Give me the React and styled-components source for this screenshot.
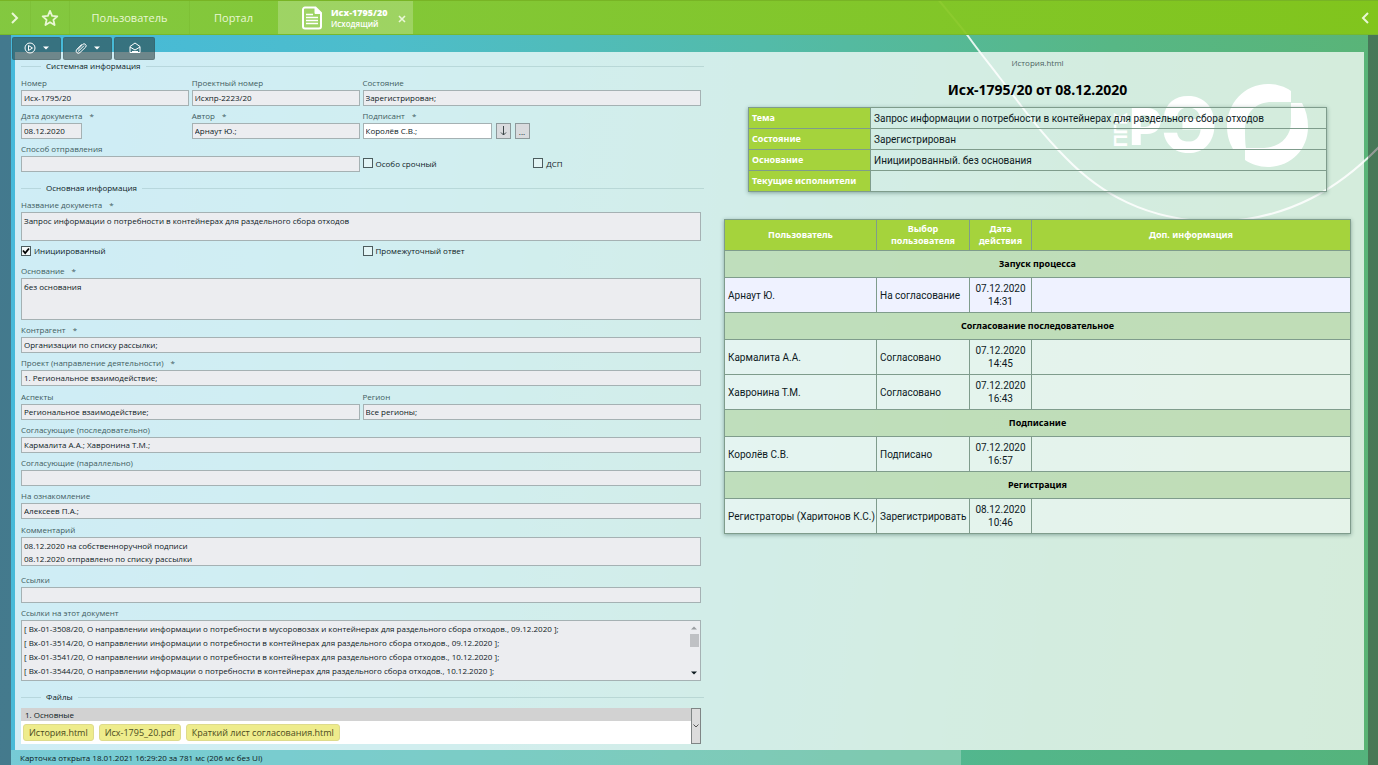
import React, { useId } from 'react';
import styled, { createGlobalStyle } from 'styled-components';

const GlobalStyle = createGlobalStyle`
  * {
    box-sizing: border-box;
  }
  body {
    margin: 0;
    font-family: 'Open Sans', 'Noto Sans', sans-serif;
    font-size: 8px;
    color: #0d1a1e;
  }
  button, input, textarea {
    font: inherit;
    color: inherit;
    margin: 0;
  }
`;

const Page = styled.div`
  position: relative;
  display: flex;
  flex-direction: column;
  min-height: 100vh;
  overflow: hidden;
  background: linear-gradient(97deg, #45b9dc 0%, #4dbdcb 26%, #53bba9 52%, #57b785 76%, #5ab373 100%);
`;

const Backdrop = styled.svg`
  position: absolute;
  top: 0;
  right: 0;
  pointer-events: none;
`;

const Nav = styled.nav`
  position: relative;
  display: flex;
  height: 35px;
  border-top: 1px solid #78b425;
  border-bottom: 1px solid #76b82c;
  background: linear-gradient(90deg, rgba(136, 201, 52, 0.93), rgba(132, 198, 22, 0.93));
  color: #e9f7d4;
`;

const NavButton = styled.button`
  display: flex;
  align-items: center;
  justify-content: center;
  width: ${({ $width }) => $width}px;
  padding: 0;
  border: 0;
  border-right: 1px solid ${({ $divider }) => ($divider ? 'rgba(90, 150, 20, 0.12)' : 'transparent')};
  background: none;
  font-size: 11px;
`;

const Tab = styled.div`
  display: flex;
  align-items: center;
  width: 135px;
  padding-left: 24px;
  background: rgba(255, 255, 255, 0.22);
  color: #fff;
`;

const TabText = styled.div`
  flex: 1;
  margin-left: 8px;
  font-size: 8px;
  font-weight: 600;
  line-height: 11px;
  strong {
    display: block;
    font-size: 9px;
    font-weight: 800;
  }
`;

const TabClose = styled.button`
  display: flex;
  padding: 2px 7px 0;
  border: 0;
  background: none;
`;

const Spacer = styled.div`
  flex: 1;
`;

const Body = styled.div`
  position: relative;
  display: flex;
  flex: 1;
  flex-direction: column;
  border-left: 11px solid rgba(66, 70, 80, 0.55);
  border-right: 10px solid rgba(50, 50, 50, 0.46);
`;

const Toolbar = styled.div`
  position: relative;
  z-index: 1;
  display: flex;
  gap: 2px;
  height: 17px;
  padding: 2px 1px 0;
`;

const ToolButton = styled.button`
  display: flex;
  align-items: center;
  justify-content: center;
  gap: 7px;
  width: ${({ $narrow }) => ($narrow ? 41 : 49)}px;
  height: 23px;
  padding: 0 0 2px;
  border: 1px solid rgba(45, 66, 69, 0.2);
  border-radius: 2px;
  background: rgba(45, 66, 69, 0.6);
  color: #fff;
`;

const Panel = styled.main`
  display: grid;
  grid-template-columns: 689fr 660fr;
  flex: 1;
  margin: 0 4px;
  background: rgba(255, 255, 255, 0.74);
`;

const Form = styled.form`
  display: flex;
  flex-direction: column;
  gap: 3px;
  padding: 7px 0 5px 6px;
`;

const GroupTitle = styled.h2`
  display: flex;
  align-items: center;
  gap: 5px;
  margin: ${({ $spaced }) => ($spaced ? 6 : 0)}px 0 0;
  font-size: 8px;
  font-weight: 400;
  line-height: 14px;
  &::before,
  &::after {
    content: '';
    width: 20px;
    height: 1px;
    background: rgba(110, 150, 150, 0.25);
  }
  &::after {
    flex: 1;
  }
`;

const Row = styled.div`
  display: grid;
  grid-template-columns: repeat(4, 1fr);
  align-items: end;
  gap: 3px;
  margin-right: 3px;
  margin-top: ${({ $space = 0 }) => $space}px;
`;

const FieldBox = styled.div`
  grid-column: span ${({ $span }) => $span};
`;

const Label = styled.label`
  display: block;
  margin-bottom: 1px;
  color: #3f5c60;
  line-height: 13px;
`;

const Required = styled.span`
  margin-left: 7px;
`;

const inputStyle = `
  display: block;
  border: 1px solid #a5b1b3;
  border-radius: 0;
  outline: none;
`;

const TextInput = styled.input`
  ${inputStyle}
  width: ${({ $short }) => ($short ? '61px' : '100%')};
  height: 16px;
  padding: 0 2px 1px;
  background: ${({ readOnly }) => (readOnly ? '#ecedf0' : '#fff')};
`;

const TextArea = styled.textarea`
  ${inputStyle}
  width: 100%;
  height: ${({ $height }) => $height}px;
  padding: 1px 2px 0;
  background: #ecedf0;
  line-height: 13px;
  resize: none;
  overflow: hidden;
`;

const Picker = styled.div`
  display: flex;
  gap: 4px;
  width: 167px;
`;

const PickerButton = styled.button`
  display: flex;
  align-items: center;
  justify-content: center;
  flex: none;
  width: 15px;
  height: 16px;
  padding: 0;
  border: 1px solid #8d999b;
  background: #d9dbde;
`;

const CheckLabel = styled.label`
  display: flex;
  align-items: center;
  gap: 3px;
  grid-column: span ${({ $span }) => $span};
  height: ${({ $tall }) => ($tall ? 18 : 13)}px;
`;

const CheckBox = styled.input`
  appearance: none;
  width: 10px;
  height: 10px;
  border: 1px solid #4c5c5e;
  background: ${({ checked }) =>
    checked
      ? `#f4f8f8 url("data:image/svg+xml,%3Csvg xmlns='http://www.w3.org/2000/svg' viewBox='0 0 8 8'%3E%3Cpath d='M1 3.5L3.2 6L7 1.5' fill='none' stroke='%23000' stroke-width='1.8'/%3E%3C/svg%3E")`
      : 'rgba(255, 255, 255, 0.4)'};
`;

const LinkBox = styled.div`
  display: flex;
  height: 61px;
  border: 1px solid #a5b1b3;
  background: #ecedf0;
`;

const LinkList = styled.ul`
  flex: 1;
  margin: 0;
  padding: 1px 2px 0;
  list-style: none;
  line-height: 14px;
  overflow: hidden;
  white-space: nowrap;
`;

const ScrollTrack = styled.div`
  display: flex;
  flex-direction: column;
  align-items: center;
  width: 12px;
  padding: 5px 0;
`;

const ScrollThumb = styled.div`
  width: 9px;
  height: 13px;
  margin: 4px 0 auto;
  background: #bfc1c4;
`;

const Files = styled.div`
  display: flex;
  height: 36px;
  margin-right: 3px;
  margin-top: 1px;
  background: #fff;
`;

const FilesBody = styled.div`
  flex: 1;
`;

const FilesHeader = styled.div`
  padding-left: 4px;
  background: #d2d2d2;
  line-height: 13px;
`;

const FileChips = styled.div`
  display: flex;
  gap: 5px;
  padding: 3px 2px;
`;

const Chip = styled.button`
  height: 17px;
  padding: 0 5px;
  border: 1px solid #dedb8c;
  border-radius: 3px;
  background: #eeec8c;
  color: #4b4b1d;
  font-size: 9px;
  line-height: 15px;
`;

const ExpandButton = styled.button`
  display: flex;
  align-items: center;
  justify-content: center;
  width: 10px;
  padding: 0;
  border: 1px solid #7f8585;
  background: #dcdcdc;
`;

const Preview = styled.section`
  padding: 4px 13px 0 20px;
`;

const PreviewName = styled.div`
  color: #4d6462;
  line-height: 13px;
  text-align: center;
`;

const PreviewTitle = styled.h1`
  margin: 11px 0 7px;
  color: #000;
  font-family: 'Noto Sans', sans-serif;
  font-size: 14px;
  line-height: 20px;
  text-align: center;
`;

const Table = styled.table`
  width: 100%;
  border-collapse: collapse;
  table-layout: fixed;
  box-shadow: 0 1px 4px rgba(40, 80, 70, 0.45);
  font-family: Roboto, sans-serif;
  font-size: 10px;
  line-height: 13px;
  th,
  td {
    padding: 0 3px;
    border: 1px solid #7f9c8c;
    white-space: nowrap;
  }
  th {
    font-family: 'Noto Sans', sans-serif;
    font-size: 9px;
    line-height: 12px;
  }
`;

const InfoWrap = styled.div`
  margin: 0 24px 27px;
`;

const InfoRow = styled.tr`
  height: 21px;
  th {
    background: #a5d33c;
    color: #fff;
    text-align: left;
  }
`;

const HeadRow = styled.tr`
  height: 31px;
  background: #a5d33c;
  color: #fff;
`;

const StageRow = styled.tr`
  height: 27px;
  background: rgba(178, 212, 158, 0.6);
  color: #000;
`;

const StepRow = styled.tr`
  height: 35px;
  background: ${({ $active }) => ($active ? '#eff2ff' : 'rgba(255, 255, 255, 0.4)')};
`;

const DateCell = styled.td`
  text-align: center;
`;

const StatusBar = styled.footer`
  height: 15px;
  background: rgba(70, 180, 150, 0.25);
`;

const StatusText = styled.div`
  width: 70%;
  height: 15px;
  padding-left: 9px;
  background: rgba(255, 255, 255, 0.26);
  line-height: 16px;
`;

const links = [
  '[ Вх-01-3508/20, О направлении информации о потребности в мусоровозах и контейнерах для раздельного сбора отходов., 09.12.2020 ];',
  '[ Вх-01-3514/20, О направлении информации о потребности в контейнерах для раздельного сбора отходов., 09.12.2020 ];',
  '[ Вх-01-3541/20, О направлении информации о потребности в контейнерах для раздельного сбора отходов., 10.12.2020 ];',
  '[ Вх-01-3544/20, О направлении нформации о потребности в контейнерах для раздельного сбора отходов., 10.12.2020 ];',
];

const files = ['История.html', 'Исх-1795_20.pdf', 'Краткий лист согласования.html'];

const info = [
  ['Тема', 'Запрос информации о потребности в контейнерах для раздельного сбора отходов'],
  ['Состояние', 'Зарегистрирован'],
  ['Основание', 'Инициированный. без основания'],
  ['Текущие исполнители', ''],
];

const stages = [
  {
    title: 'Запуск процесса',
    steps: [{ user: 'Арнаут Ю.', choice: 'На согласование', date: '07.12.2020', time: '14:31', active: true }],
  },
  {
    title: 'Согласование последовательное',
    steps: [
      { user: 'Кармалита А.А.', choice: 'Согласовано', date: '07.12.2020', time: '14:45' },
      { user: 'Хавронина Т.М.', choice: 'Согласовано', date: '07.12.2020', time: '16:43' },
    ],
  },
  {
    title: 'Подписание',
    steps: [{ user: 'Королёв С.В.', choice: 'Подписано', date: '07.12.2020', time: '16:57' }],
  },
  {
    title: 'Регистрация',
    steps: [{ user: 'Регистраторы (Харитонов К.С.)', choice: 'Зарегистрировать', date: '08.12.2020', time: '10:46' }],
  },
];

const Field = ({ label, value, span = 4, required, short, height, children }) => {
  const id = useId();
  return (
    <FieldBox $span={span}>
      <Label htmlFor={id}>
        {label}
        {required && <Required>*</Required>}
      </Label>
      {children && children(id)}
      {!children && height && <TextArea id={id} $height={height} defaultValue={value} readOnly />}
      {!children && !height && <TextInput id={id} $short={short} defaultValue={value} readOnly />}
    </FieldBox>
  );
};

const Check = ({ label, span, checked = false, tall }) => (
  <CheckLabel $span={span} $tall={tall}>
    <CheckBox type="checkbox" checked={checked} readOnly />
    {label}
  </CheckLabel>
);

const Chevron = ({ left }) => (
  <svg width="8" height="12" viewBox="0 0 8 12" fill="none" stroke="currentColor" strokeWidth="2">
    <path d={left ? 'M7 1L2 6l5 5' : 'M1 1l5 5-5 5'} />
  </svg>
);

const Caret = () => (
  <svg width="6" height="4" viewBox="0 0 6 4" fill="currentColor">
    <path d="M0 0.5h6L3 3.5z" />
  </svg>
);

const StarIcon = () => (
  <svg width="18" height="18" viewBox="0 0 24 24" fill="none" stroke="currentColor" strokeWidth="2.4" strokeLinejoin="round">
    <path d="M12 2.5l2.8 6.6 7 .6-5.3 4.7 1.6 7-6.1-3.8-6.1 3.8 1.6-7L2.2 9.7l7-.6z" />
  </svg>
);

const DocumentIcon = () => (
  <svg width="21" height="24" viewBox="0 0 21 24" fill="none" stroke="#fff">
    <path d="M3 1.5h10.5l5.5 5.5v13.5a2 2 0 0 1-2 2H3a2 2 0 0 1-2-2v-17a2 2 0 0 1 2-2z" strokeWidth="2" />
    <path d="M13 1v6.500h6.500z" fill="#fff" />
    <path d="M4 8.500h7M4 11.500h12M4 14.500h12M4 17.500h12" strokeWidth="1.6" />
  </svg>
);

const BackgroundArt = () => (
  <Backdrop width="460" height="230" viewBox="918 0 460 230">
    <path
      d="M937 -2C950 14 959 24 968 36C980 53 988 62 1000 78C1022 107 1041 133 1066 158C1100 193 1145 220 1215 222C1290 220 1340 187 1379 147"
      fill="none"
      stroke="#fff"
      strokeOpacity="0.85"
      strokeWidth="2"
    />
    <g fill="#fff" fontFamily="Inter, sans-serif" fontWeight="800">
      <text transform="translate(1127 147) rotate(-90)" fontSize="17" fontWeight="700">ПГК</text>
      <text x="1129" y="145" fontSize="51">Р</text>
      <text x="1161" y="152" fontSize="76">Э</text>
    </g>
    <path
      d="M1291 91C1284 86 1276 84 1268 84C1244 84 1227 104 1227 126C1227 135 1229 142 1233 149H1246C1245 142 1245 136 1245 128C1246 112 1256 102 1272 102H1291Z"
      fill="#fff"
    />
    <path
      d="M1291 103H1302C1306 110 1308 118 1308 127C1308 150 1290 167 1268 167C1259 167 1251 164 1245 160V148H1264C1281 147 1291 136 1291 122Z"
      fill="#fff"
    />
  </Backdrop>
);

const CardForm = () => (
  <Form>
    <GroupTitle>Системная информация</GroupTitle>
    <Row>
      <Field label="Номер" value="Исх-1795/20" span={1} />
      <Field label="Проектный номер" value="Исхпр-2223/20" span={1} />
      <Field label="Состояние" value="Зарегистрирован;" span={2} />
    </Row>
    <Row>
      <Field label="Дата документа" value="08.12.2020" span={1} required short />
      <Field label="Автор" value="Арнаут Ю.;" span={1} required />
      <Field label="Подписант" span={2} required>
        {(id) => (
          <Picker>
            <TextInput id={id} defaultValue="Королёв С.В.;" />
            <PickerButton type="button" aria-label="Выбрать">
              <svg width="9" height="10" viewBox="0 0 9 10" fill="none" stroke="#3c4648">
                <path d="M4.500 0v9M2 6.500L4.500 9L7 6.500" />
              </svg>
            </PickerButton>
            <PickerButton type="button">...</PickerButton>
          </Picker>
        )}
      </Field>
    </Row>
    <Row>
      <Field label="Способ отправления" value="" span={2} />
      <Check label="Особо срочный" span={1} tall />
      <Check label="ДСП" span={1} tall />
    </Row>

    <GroupTitle $spaced>Основная информация</GroupTitle>
    <Row>
      <Field
        label="Название документа"
        value="Запрос информации о потребности в контейнерах для раздельного сбора отходов"
        required
        height={29}
      />
    </Row>
    <Row>
      <Check label="Инициированный" span={2} checked />
      <Check label="Промежуточный ответ" span={2} />
    </Row>
    <Row $space={4}>
      <Field label="Основание" value="без основания" required height={42} />
    </Row>
    <Row>
      <Field label="Контрагент" value="Организации по списку рассылки;" required />
    </Row>
    <Row>
      <Field label="Проект (направление деятельности)" value="1. Региональное взаимодействие;" required />
    </Row>
    <Row $space={1}>
      <Field label="Аспекты" value="Региональное взаимодействие;" span={2} />
      <Field label="Регион" value="Все регионы;" span={2} />
    </Row>
    <Row>
      <Field label="Согласующие (последовательно)" value="Кармалита А.А.; Хавронина Т.М.;" />
    </Row>
    <Row>
      <Field label="Согласующие (параллельно)" value="" />
    </Row>
    <Row>
      <Field label="На ознакомление" value="Алексеев П.А.;" />
    </Row>
    <Row $space={1}>
      <Field
        label="Комментарий"
        value={'08.12.2020 на собственноручной подписи\n08.12.2020 отправлено по списку рассылки'}
        height={29}
      />
    </Row>
    <Row $space={4}>
      <Field label="Ссылки" value="" />
    </Row>
    <Row>
      <Field label="Ссылки на этот документ">
        {(id) => (
          <LinkBox id={id}>
            <LinkList>
              {links.map((link) => (
                <li key={link}>{link}</li>
              ))}
            </LinkList>
            <ScrollTrack>
              <svg width="6" height="4" viewBox="0 0 6 4" fill="#9a9da0">
                <path d="M0 3.500h6L3 0.500z" />
              </svg>
              <ScrollThumb />
              <Caret />
            </ScrollTrack>
          </LinkBox>
        )}
      </Field>
    </Row>

    <GroupTitle $spaced>Файлы</GroupTitle>
    <Files>
      <FilesBody>
        <FilesHeader>1. Основные</FilesHeader>
        <FileChips>
          {files.map((file) => (
            <Chip key={file} type="button">
              {file}
            </Chip>
          ))}
        </FileChips>
      </FilesBody>
      <ExpandButton type="button" aria-label="Развернуть">
        <svg width="6" height="4" viewBox="0 0 6 4" fill="none" stroke="#555">
          <path d="M0.500 0.500L3 3L5.500 0.500" />
        </svg>
      </ExpandButton>
    </Files>
  </Form>
);

const History = () => (
  <Preview>
    <PreviewName>История.html</PreviewName>
    <PreviewTitle>Исх-1795/20 от 08.12.2020</PreviewTitle>
    <InfoWrap>
      <Table>
        <colgroup>
          <col width="122" />
          <col />
        </colgroup>
        <tbody>
          {info.map(([name, value]) => (
            <InfoRow key={name}>
              <th scope="row">{name}</th>
              <td>{value}</td>
            </InfoRow>
          ))}
        </tbody>
      </Table>
    </InfoWrap>
    <Table>
      <colgroup>
        <col width="152" />
        <col width="93" />
        <col width="62" />
        <col />
      </colgroup>
      <thead>
        <HeadRow>
          <th>Пользователь</th>
          <th>
            Выбор
            <br />
            пользователя
          </th>
          <th>
            Дата
            <br />
            действия
          </th>
          <th>Доп. информация</th>
        </HeadRow>
      </thead>
      <tbody>
        {stages.map((stage) => (
          <React.Fragment key={stage.title}>
            <StageRow>
              <th colSpan={4}>{stage.title}</th>
            </StageRow>
            {stage.steps.map((step) => (
              <StepRow key={step.user} $active={step.active}>
                <td>{step.user}</td>
                <td>{step.choice}</td>
                <DateCell>
                  {step.date}
                  <br />
                  {step.time}
                </DateCell>
                <td />
              </StepRow>
            ))}
          </React.Fragment>
        ))}
      </tbody>
    </Table>
  </Preview>
);

export default function App() {
  return (
    <Page>
      <GlobalStyle />
      <BackgroundArt />
      <Nav>
        <NavButton $width={31} $divider aria-label="Меню">
          <Chevron />
        </NavButton>
        <NavButton $width={39} $divider aria-label="Избранное">
          <StarIcon />
        </NavButton>
        <NavButton $width={120} $divider>Пользователь</NavButton>
        <NavButton $width={88}>Портал</NavButton>
        <Tab>
          <DocumentIcon />
          <TabText>
            <strong>Исх-1795/20</strong>
            Исходящий
          </TabText>
          <TabClose aria-label="Закрыть">
            <svg width="8" height="8" viewBox="0 0 8 8" stroke="#eaf7d8" strokeWidth="1.6">
              <path d="M1 1l6 6M7 1l-6 6" />
            </svg>
          </TabClose>
        </Tab>
        <Spacer />
        <NavButton $width={25} aria-label="Свернуть">
          <Chevron left />
        </NavButton>
      </Nav>
      <Body>
        <Toolbar>
          <ToolButton aria-label="Запустить">
            <svg width="12" height="12" viewBox="0 0 12 12" fill="none" stroke="currentColor">
              <circle cx="6" cy="6" r="5" />
              <path d="M4.500 3.500v5L8.500 6z" />
            </svg>
            <Caret />
          </ToolButton>
          <ToolButton aria-label="Вложения">
            <svg width="12" height="12" viewBox="0 0 12 12" fill="none" stroke="currentColor" strokeLinecap="round">
              <path d="M4.500 8.200L8.800 3.900M3 7.500L7.600 2.500a2 2 0 0 1 3 2.700L5 10.500a2.200 2.200 0 0 1-3.300-3L6.500 2.600M4.500 8.200L3.200 9.300" />
            </svg>
            <Caret />
          </ToolButton>
          <ToolButton $narrow aria-label="Письмо">
            <svg width="12" height="12" viewBox="0 0 12 12" fill="none" stroke="currentColor" strokeLinejoin="round">
              <path d="M1 4.500L6 1l5 3.500v6H1zM1 5l5 3 5-3M3 9.500h6" />
            </svg>
          </ToolButton>
        </Toolbar>
        <Panel>
          <CardForm />
          <History />
        </Panel>
        <StatusBar>
          <StatusText>Карточка открыта 18.01.2021 16:29:20 за 781 мс (206 мс без UI)</StatusText>
        </StatusBar>
      </Body>
    </Page>
  );
}
